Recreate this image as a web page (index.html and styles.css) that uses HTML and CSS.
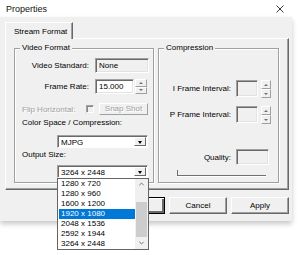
FILE: index.html
```html
<!DOCTYPE html>
<html>
<head>
<meta charset="utf-8">
<link rel="stylesheet" href="styles.css">
</head>
<body>
<div class="window">
  <div class="titlebar">
    <span class="title">Properties</span>
    <svg class="close" width="8" height="8" viewBox="0 0 8 8"><path d="M0.5 0.5L7.5 7.5M7.5 0.5L0.5 7.5" stroke="#222" stroke-width="0.9" fill="none"/></svg>
  </div>
  <div class="dialog">
    <div class="tabs"><div class="tab">Stream Format</div></div>
    <div class="panel">
      <div class="group vf">
        <span class="legend">Video Format</span>
        <div class="row">
          <span class="lbl">Video Standard:</span>
          <div class="box none">None</div>
        </div>
        <div class="row r2">
          <span class="lbl">Frame Rate:</span>
          <div class="box fr">15.000</div>
          <div class="spin"><div class="sbtn up"></div><div class="sbtn down"></div></div>
        </div>
        <div class="row r3">
          <span class="flip">Flip Horizontal:</span>
          <div class="check"></div>
          <div class="snap">Snap Shot</div>
        </div>
        <div class="cap cs">Color Space / Compression:</div>
        <div class="combo c1"><span class="ctext">MJPG</span><div class="cbtn"></div></div>
        <div class="cap os">Output Size:</div>
        <div class="combo c2"><span class="ctext">3264 x 2448</span><div class="cbtn"></div></div>
        <div class="list">
          <div class="items">
            <div class="item">1280 x 720</div>
            <div class="item">1280 x 960</div>
            <div class="item">1600 x 1200</div>
            <div class="item sel">1920 x 1080</div>
            <div class="item">2048 x 1536</div>
            <div class="item">2592 x 1944</div>
            <div class="item">3264 x 2448</div>
          </div>
          <div class="sbar">
            <svg class="chev" width="7" height="5" viewBox="0 0 7 5"><path d="M0.8 4L3.5 1.3L6.2 4" stroke="#555" stroke-width="1" fill="none"/></svg>
            <div class="track"><div class="thumb"></div></div>
            <svg class="chev" width="7" height="5" viewBox="0 0 7 5"><path d="M0.8 1L3.5 3.7L6.2 1" stroke="#555" stroke-width="1" fill="none"/></svg>
          </div>
        </div>
      </div>
      <div class="group comp">
        <span class="legend">Compression</span>
        <div class="row">
          <span class="clbl">I Frame Interval:</span>
          <div class="box ibox"></div>
          <div class="spin cspin"><div class="sbtn up"></div><div class="sbtn down"></div></div>
        </div>
        <div class="row rp">
          <span class="clbl">P Frame Interval:</span>
          <div class="box ibox"></div>
          <div class="spin cspin"><div class="sbtn up"></div><div class="sbtn down"></div></div>
        </div>
        <div class="row rq">
          <span class="clbl">Quality:</span>
          <div class="box qbox"></div>
        </div>
        <div class="slider"></div>
      </div>
    </div>
    <div class="buttons">
      <div class="btn ok">OK</div>
      <div class="btn">Cancel</div>
      <div class="btn">Apply</div>
    </div>
  </div>
</div>
</body>
</html>
```

FILE: styles.css
```css
* { box-sizing: border-box; }
body {
  margin: 0;
  width: 300px;
  height: 255px;
  background: #fff;
  font-family: "Liberation Sans", Arial, sans-serif;
  font-size: 8px;
  color: #000;
  overflow: hidden;
}
.window { width: 292px; }
.titlebar {
  height: 17px;
  display: flex;
  align-items: center;
  justify-content: space-between;
  padding: 0 8px 0 6px;
  background: #fff;
}
.title { font-size: 9px; color: #111; }
.close { display: block; }
.dialog {
  background: #f0f0f0;
  padding: 5px 3px 7px 5px;
  box-shadow: 0 3px 5px rgba(0,0,0,0.22);
  position: relative;
}
.tabs { display: flex; height: 16px; }
.tab {
  width: 68px;
  height: 17px;
  padding: 3px 0 0 8px;
  line-height: 11px;
  border-left: 1px solid #fff;
  border-top: 1px solid #fff;
  border-right: 1px solid #696969;
  box-shadow: inset -1px 0 #a0a0a0;
  background: #f0f0f0;
  position: relative;
  z-index: 1;
}
.panel {
  height: 152px;
  border: 1px solid;
  border-color: #fff #696969 #696969 #fff;
  box-shadow: inset -1px -1px #a0a0a0;
  display: flex;
  gap: 4px;
  padding: 9px 0 0 8px;
}
.group {
  position: relative;
  height: 135px;
  border: 1px solid #a0a0a0;
  box-shadow: inset 1px 1px #fff, 1px 1px #fff;
}
.vf { width: 140px; padding-top: 9px; }
.comp { width: 121px; padding-top: 30px; }
.legend {
  position: absolute;
  top: -6px;
  left: 5px;
  padding: 0 2px;
  line-height: 10px;
  background: #f0f0f0;
}
.row { display: flex; align-items: center; }
.lbl { width: 74px; text-align: right; margin-right: 6px; }
.box {
  height: 15px;
  border: 1px solid;
  border-color: #a0a0a0 #fff #fff #a0a0a0;
  box-shadow: inset 1px 1px #696969, inset -1px -1px #e3e3e3;
  padding: 0 0 0 3px;
  line-height: 13px;
  background: #f0f0f0;
}
.none { width: 54px; }
.r2 { margin-top: 6px; }
.fr { width: 39px; background: #fff; }
.spin {
  width: 12px;
  height: 15px;
  margin-left: 1px;
  display: flex;
  flex-direction: column;
}
.sbtn {
  flex: 1;
  position: relative;
  border: 1px solid;
  border-color: #fff #a0a0a0 #a0a0a0 #fff;
  background: #f0f0f0;
}
.sbtn::after {
  content: "";
  position: absolute;
  left: 50%;
  top: 50%;
  margin: -1px 0 0 -2px;
  border-left: 2px solid transparent;
  border-right: 2px solid transparent;
}
.up::after { border-bottom: 2px solid #707070; }
.down::after { border-top: 2px solid #707070; }
.r3 { margin-top: 9px; height: 12px; padding-left: 7px; }
.flip {
  width: 64px;
  color: #a0a0a0;
  text-shadow: 1px 1px #fff;
  white-space: nowrap;
}
.check {
  width: 8px;
  height: 8px;
  border-top: 1px solid #a0a0a0;
  border-left: 1px solid #a0a0a0;
  border-bottom: 1px solid #fff;
  border-right: 1px solid #fff;
  box-shadow: inset 1px 1px #888;
}
.snap {
  width: 49px;
  height: 12px;
  margin-left: 5px;
  border: 1px solid;
  border-color: #fff #a0a0a0 #a0a0a0 #fff;
  color: #a0a0a0;
  text-shadow: 1px 1px #fff;
  text-align: center;
  line-height: 10px;
}
.cap { padding-left: 7px; line-height: 10px; }
.cs { margin-top: 3px; }
.os { margin-top: 2px; }
.combo {
  width: 91px;
  height: 13px;
  margin-left: 42px;
  display: flex;
  justify-content: space-between;
  border: 1px solid;
  border-color: #a0a0a0 #fff #fff #a0a0a0;
  box-shadow: inset 1px 1px #696969;
  background: #fff;
  padding: 1px 1px 1px 1px;
}
.c1 { margin-top: 7px; }
.c2 { margin-top: 5px; }
.ctext { padding-left: 2px; line-height: 11px; }
.cbtn {
  width: 12px;
  position: relative;
  border: 1px solid;
  border-color: #fff #696969 #696969 #fff;
  background: #f0f0f0;
}
.cbtn::after {
  content: "";
  position: absolute;
  left: 3px;
  top: 3px;
  border-left: 2.5px solid transparent;
  border-right: 2.5px solid transparent;
  border-top: 3px solid #000;
}
.list {
  position: absolute;
  left: 42px;
  top: 129px;
  width: 92px;
  height: 72px;
  border: 1px solid #646464;
  background: #fff;
  display: flex;
  z-index: 5;
}
.items { flex: 1; padding-left: 1px; }
.item { height: 10px; line-height: 10px; padding-left: 2px; }
.sel { background: #0078d7; color: #fff; }
.sbar {
  width: 13px;
  background: #f0f0f0;
  display: flex;
  flex-direction: column;
  align-items: center;
  padding: 3px 0 4px;
}
.chev { display: block; }
.track { flex: 1; width: 100%; padding: 16px 1px 4px; }
.thumb { height: 35px; background: #cdcdcd; }
.clbl { width: 72px; text-align: right; margin-right: 5px; white-space: nowrap; }
.ibox { width: 22px; height: 17px; }
.cspin { width: 10px; height: 18px; margin-left: 3px; margin-top: 1px; }
.rp { margin-top: 7px; }
.rq { margin-top: 25px; }
.qbox { width: 33px; height: 16px; }
.slider {
  margin: 5px 0 0 18px;
  width: 89px;
  height: 6px;
  border-left: 1px solid #707070;
  border-bottom: 1px solid #707070;
  box-shadow: 0 1px #fff;
}
.buttons {
  display: flex;
  justify-content: flex-end;
  gap: 4px;
  margin-top: 7px;
}
.btn {
  width: 58px;
  height: 17px;
  border: 1px solid;
  border-color: #fff #696969 #696969 #fff;
  box-shadow: inset -1px -1px #a0a0a0;
  text-align: center;
  line-height: 15px;
}
.ok { border: 1px solid #000; box-shadow: inset 1px 1px #fff, inset -2px -2px #696969; }
```
